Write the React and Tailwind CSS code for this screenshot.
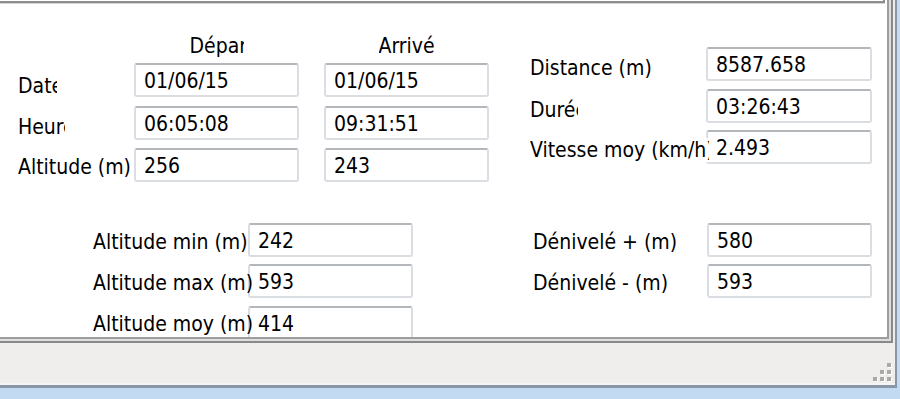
import React from "react";

function Field({ children, wide }) {
  return (
    <div
      className={
        wide
          ? "h-[34px] w-[166px] shrink-0 rounded-[3px] border-2 border-[#dadde2] border-t-[#b3b6bb] bg-white pl-[8px] pt-[4px] whitespace-nowrap"
          : "h-[34px] w-[165px] shrink-0 rounded-[3px] border-2 border-[#dadde2] border-t-[#b3b6bb] bg-white pl-[8px] pt-[4px] whitespace-nowrap"
      }
    >
      {children}
    </div>
  );
}

function Grip() {
  const dots = [
    [14, 0],
    [7, 7],
    [14, 7],
    [0, 14],
    [7, 14],
    [14, 14],
  ];
  return (
    <svg width="19" height="19" viewBox="0 0 19 19">
      {dots.map(([x, y], i) => (
        <g key={i}>
          <rect x={x + 1} y={y + 1} width="4" height="4" fill="#ffffff" />
          <rect x={x} y={y} width="4" height="4" fill="#a9a9a9" />
        </g>
      ))}
    </svg>
  );
}

export default function App() {
  return (
    <div className="w-[900px] h-[399px] bg-[#c2daf2] overflow-hidden">
      <div className="w-[897px] h-[388px] bg-[#f0eeed] border-r-2 border-b-[3px] border-[#8797a7] flex flex-col">
        <div className="w-[893px] h-[343px] shrink-0 border-r-2 border-b-2 border-[#898989]">
          <div className="h-full border-r-2 border-b-2 border-[#dedede]">
            <div className="h-full border-r-2 border-b-2 border-[#9d9d9d] bg-white overflow-hidden font-['DejaVu_Sans_Condensed','DejaVu_Sans',sans-serif] font-stretch-semi-condensed text-[21px] leading-[24px] text-black">
              {/* top box bottom edge */}
              <div className="w-[885px] h-[3px] border-b-2 border-r-2 border-[#8d8d8d]" />
              <div className="w-[885px] h-px bg-[#d4d4d4]" />

              {/* top section */}
              <div className="flex items-start">
                {/* left group */}
                <div className="mt-[30px] pl-[18px] w-[530px] shrink-0">
                  <div className="flex pl-[116px]">
                    <div className="w-[165px] flex justify-center">
                      <span className="w-[54px] overflow-hidden whitespace-nowrap">Départ</span>
                    </div>
                    <div className="ml-[25px] w-[165px] flex justify-center">
                      <span className="w-[56px] overflow-hidden whitespace-nowrap">Arrivée</span>
                    </div>
                  </div>
                  <div className="flex items-start mt-[5px]">
                    <div className="w-[116px] shrink-0 mt-[11px]">
                      <div className="w-[39px] overflow-hidden whitespace-nowrap">Date</div>
                    </div>
                    <Field>01/06/15</Field>
                    <div className="ml-[25px]">
                      <Field>01/06/15</Field>
                    </div>
                  </div>
                  <div className="flex items-start mt-[8px]">
                    <div className="w-[116px] shrink-0 mt-[9px]">
                      <div className="w-[47px] overflow-hidden whitespace-nowrap">Heure</div>
                    </div>
                    <Field>06:05:08</Field>
                    <div className="ml-[25px]">
                      <Field>09:31:51</Field>
                    </div>
                  </div>
                  <div className="flex items-start mt-[8px]">
                    <div className="w-[116px] shrink-0 mt-[7px] whitespace-nowrap">Altitude (m)</div>
                    <Field>256</Field>
                    <div className="ml-[25px]">
                      <Field>243</Field>
                    </div>
                  </div>
                </div>

                {/* right group */}
                <div className="mt-[43px]">
                  <div className="flex items-start">
                    <div className="w-[176px] shrink-0 mt-[9px] whitespace-nowrap">Distance (m)</div>
                    <Field wide>8587.658</Field>
                  </div>
                  <div className="flex items-start mt-[8px]">
                    <div className="w-[176px] shrink-0 mt-[9px]">
                      <div className="w-[48px] overflow-hidden whitespace-nowrap">Durée</div>
                    </div>
                    <Field wide>03:26:43</Field>
                  </div>
                  <div className="flex items-start mt-[7px]">
                    <div className="w-[176px] shrink-0 mt-[8px]">
                      <div className="relative z-10 w-[179px] overflow-hidden whitespace-nowrap bg-white">Vitesse moy (km/h)</div>
                    </div>
                    <Field wide>2.493</Field>
                  </div>
                </div>
              </div>

              {/* bottom section */}
              <div className="flex items-start mt-[41px]">
                <div className="pl-[93px] w-[533px] shrink-0">
                  <div className="flex items-start">
                    <div className="relative z-10 w-[155px] shrink-0 mt-[7px] whitespace-nowrap">Altitude min (m)</div>
                    <Field>242</Field>
                  </div>
                  <div className="flex items-start mt-[7px]">
                    <div className="relative z-10 w-[155px] shrink-0 mt-[7px] whitespace-nowrap">Altitude max (m)</div>
                    <Field>593</Field>
                  </div>
                  <div className="flex items-start mt-[8px]">
                    <div className="relative z-10 w-[155px] shrink-0 mt-[6px] whitespace-nowrap">Altitude moy (m)</div>
                    <Field>414</Field>
                  </div>
                </div>
                <div>
                  <div className="flex items-start">
                    <div className="w-[174px] shrink-0 mt-[7px] whitespace-nowrap">Dénivelé + (m)</div>
                    <Field>580</Field>
                  </div>
                  <div className="flex items-start mt-[7px]">
                    <div className="w-[174px] shrink-0 mt-[7px] whitespace-nowrap">Dénivelé - (m)</div>
                    <Field>593</Field>
                  </div>
                </div>
              </div>
            </div>
          </div>
        </div>
        <div className="flex-1 flex justify-end items-end border-b-2 border-[#f8f4f4] pr-[3px] pb-[1px]">
          <Grip />
        </div>
      </div>
    </div>
  );
}
